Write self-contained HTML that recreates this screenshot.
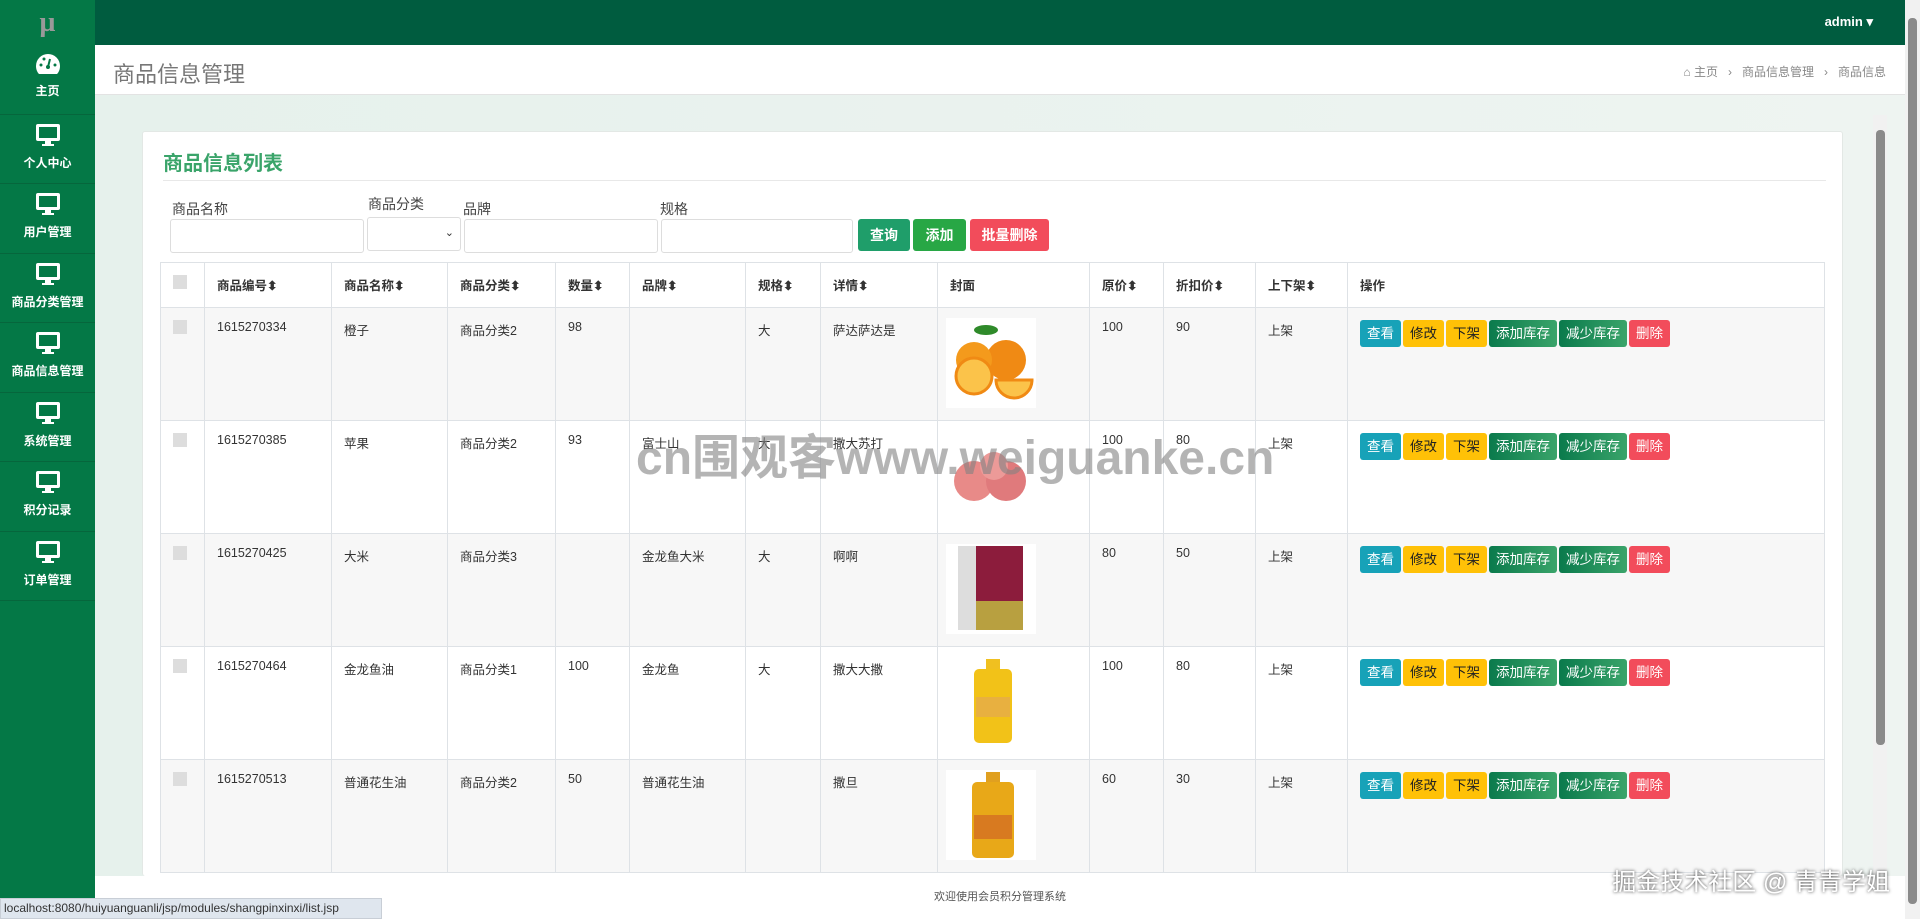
<!DOCTYPE html>
<html style="height:919px;overflow:hidden"><head><meta charset="utf-8">
<style>
*{box-sizing:border-box;margin:0;padding:0}
body{width:1920px;height:919px;overflow:hidden;position:relative;background:#fff;font-family:"Liberation Sans","Noto Sans CJK SC",sans-serif;color:#333;font-size:13px}
.side{position:absolute;left:0;top:0;width:95px;height:919px;background:#047846}
.logo{height:45px;color:#999;font-size:28px;font-weight:bold;text-align:center;line-height:45px;font-family:"Liberation Serif",serif}
.item{height:69.5px;border-bottom:1px solid #06663c;text-align:center;color:#fff;font-size:12px;font-weight:bold;padding-top:8px}
.item svg{display:block;margin:0 auto 7px}
.top{position:absolute;left:95px;top:0;width:1810px;height:45px;background:#005c3f}
.admin{position:absolute;right:32px;top:14px;color:#fff;font-size:13px;font-weight:bold}
.hdr{position:absolute;left:95px;top:45px;width:1810px;height:50px;background:#fff;border-bottom:1px solid #e3e3e3}
.hdr h1{position:absolute;left:18px;top:12px;font-size:22px;font-weight:normal;color:#777}
.bc{position:absolute;right:19px;top:18px;font-size:12px;color:#888}
.main{position:absolute;left:95px;top:95px;width:1810px;height:781px;background:linear-gradient(90deg,#e6f1ec,#eef4f1);overflow:hidden}
.card{position:absolute;left:47px;top:36px;width:1701px;height:745px;background:#fff;border:1px solid #e3e8e5;border-bottom:0;border-radius:3px;overflow:hidden}
.card h2{position:absolute;left:20px;top:15px;font-size:20px;color:#3aa46a}
.hr{position:absolute;left:20px;right:16px;top:48px;border-top:1px solid #e8e8e8}
.lbl{position:absolute;top:67px;font-size:14px;color:#444}
.inp{position:absolute;top:87px;height:34px;border:1px solid #ddd;border-radius:3px;background:#fff}
.btn{position:absolute;top:87px;height:32px;color:#fff;font-size:14px;font-weight:bold;line-height:32px;text-align:center;border-radius:3px}
table{position:absolute;left:17px;top:130px;border-collapse:collapse;width:1665px}
td,th{border:1px solid #dee2e6;vertical-align:top;text-align:left;padding:12px 12px;font-size:12.5px}
th{height:45px;font-weight:bold}
td{height:113px}
tr.o td{background:#f7f7f7}
.cb{display:inline-block;width:14px;height:14px;background:#ddd}
.ops span{display:inline-block;height:27px;line-height:27px;padding:0 7px;font-size:13.5px;margin-right:2px;border-radius:3px;color:#fff}
.v{background:#17a2b8}.e{background:#ffc107;color:#222!important}.g{background:linear-gradient(90deg,#0a7a4c,#3aa46a)}.r{background:#f24c5b}
.img{width:90px;height:90px;margin-top:-2px;margin-left:-4px;position:relative;background:#fff}
.foot{position:absolute;left:95px;top:876px;width:1810px;height:43px;background:#fff;text-align:center;line-height:43px;font-size:11px;color:#555}
.status{position:absolute;left:0;top:898px;width:382px;height:21px;background:#dfe6ee;border:1px solid #c8ced6;font-size:12px;color:#333;line-height:19px;padding-left:3px;overflow:hidden}
.sb{position:absolute;left:1905px;top:0;width:15px;height:919px;background:#f1f1f1}
.sb div{position:absolute;left:3px;top:18px;width:9px;height:886px;background:#8a8a8a;border-radius:4px}
.isb{position:absolute;left:1873px;top:115px;width:14px;height:760px;background:#f1f1f1}
.isb div{position:absolute;left:3px;top:15px;width:9px;height:615px;background:#8a8a8a;border-radius:4px}
.wm{position:absolute;left:636px;top:418px;font-size:48px;font-weight:bold;color:rgba(130,130,130,.6);white-space:nowrap}
.jj{position:absolute;right:30px;top:862px;font-size:24px;color:#fff;text-shadow:0 0 3px #333;white-space:nowrap}
</style></head><body>
<div class="side">
<div class="logo">µ</div>
<div class="item"><svg width="26" height="22" viewBox="0 0 26 22"><path d="M13 1A12 12 0 0 0 1 13c0 3 1 6 3 8h18c2-2 3-5 3-8A12 12 0 0 0 13 1z" fill="#fff"/><circle cx="13" cy="14" r="2" fill="#047846"/><path d="M13 14l2-8" stroke="#047846" stroke-width="2"/><circle cx="6" cy="12" r="1.5" fill="#047846"/><circle cx="20" cy="12" r="1.5" fill="#047846"/><circle cx="9" cy="6" r="1.5" fill="#047846"/></svg>主页</div>
<div class="item"><svg width="26" height="24" viewBox="0 0 26 24"><rect x="1" y="1" width="24" height="17" rx="2" fill="#fff"/><rect x="4" y="4" width="18" height="11" fill="#047846"/><rect x="10" y="18" width="6" height="4" fill="#fff"/><rect x="7" y="21" width="12" height="2" fill="#fff"/></svg>个人中心</div>
<div class="item"><svg width="26" height="24" viewBox="0 0 26 24"><rect x="1" y="1" width="24" height="17" rx="2" fill="#fff"/><rect x="4" y="4" width="18" height="11" fill="#047846"/><rect x="10" y="18" width="6" height="4" fill="#fff"/><rect x="7" y="21" width="12" height="2" fill="#fff"/></svg>用户管理</div>
<div class="item"><svg width="26" height="24" viewBox="0 0 26 24"><rect x="1" y="1" width="24" height="17" rx="2" fill="#fff"/><rect x="4" y="4" width="18" height="11" fill="#047846"/><rect x="10" y="18" width="6" height="4" fill="#fff"/><rect x="7" y="21" width="12" height="2" fill="#fff"/></svg>商品分类管理</div>
<div class="item"><svg width="26" height="24" viewBox="0 0 26 24"><rect x="1" y="1" width="24" height="17" rx="2" fill="#fff"/><rect x="4" y="4" width="18" height="11" fill="#047846"/><rect x="10" y="18" width="6" height="4" fill="#fff"/><rect x="7" y="21" width="12" height="2" fill="#fff"/></svg>商品信息管理</div>
<div class="item"><svg width="26" height="24" viewBox="0 0 26 24"><rect x="1" y="1" width="24" height="17" rx="2" fill="#fff"/><rect x="4" y="4" width="18" height="11" fill="#047846"/><rect x="10" y="18" width="6" height="4" fill="#fff"/><rect x="7" y="21" width="12" height="2" fill="#fff"/></svg>系统管理</div>
<div class="item"><svg width="26" height="24" viewBox="0 0 26 24"><rect x="1" y="1" width="24" height="17" rx="2" fill="#fff"/><rect x="4" y="4" width="18" height="11" fill="#047846"/><rect x="10" y="18" width="6" height="4" fill="#fff"/><rect x="7" y="21" width="12" height="2" fill="#fff"/></svg>积分记录</div>
<div class="item"><svg width="26" height="24" viewBox="0 0 26 24"><rect x="1" y="1" width="24" height="17" rx="2" fill="#fff"/><rect x="4" y="4" width="18" height="11" fill="#047846"/><rect x="10" y="18" width="6" height="4" fill="#fff"/><rect x="7" y="21" width="12" height="2" fill="#fff"/></svg>订单管理</div>
</div>
<div class="top"><div class="admin">admin ▾</div></div>
<div class="hdr"><h1>商品信息管理</h1><div class="bc">&#8962; 主页 &nbsp;&nbsp;›&nbsp;&nbsp; 商品信息管理 &nbsp;&nbsp;›&nbsp;&nbsp; 商品信息</div></div>
<div class="main">
<div class="card">
<h2>商品信息列表</h2><div class="hr"></div>
<div class="lbl" style="left:29px">商品名称</div>
<div class="lbl" style="left:225px;top:62px">商品分类</div>
<div class="lbl" style="left:320px">品牌</div>
<div class="lbl" style="left:517px">规格</div>
<div class="inp" style="left:27px;width:194px"></div>
<div class="inp" style="left:224px;width:94px;top:85px"><span style="position:absolute;right:6px;top:8px;font-size:11px">&#8964;</span></div>
<div class="inp" style="left:321px;width:194px"></div>
<div class="inp" style="left:518px;width:192px"></div>
<div class="btn" style="left:715px;width:52px;background:#1f9e6a">查询</div>
<div class="btn" style="left:770px;width:53px;background:#28a745">添加</div>
<div class="btn" style="left:827px;width:79px;background:#f24c5b">批量删除</div>
<table>
<tr><th style="width:44px"><span class="cb"></span></th><th style="width:127px">商品编号⬍</th><th style="width:116px">商品名称⬍</th><th style="width:108px">商品分类⬍</th><th style="width:74px">数量⬍</th><th style="width:116px">品牌⬍</th><th style="width:75px">规格⬍</th><th style="width:117px">详情⬍</th><th style="width:152px">封面</th><th style="width:74px">原价⬍</th><th style="width:92px">折扣价⬍</th><th style="width:92px">上下架⬍</th><th>操作</th></tr>
<tr class="o"><td><span class="cb"></span></td><td>1615270334</td><td>橙子</td><td>商品分类2</td><td>98</td><td></td><td>大</td><td>萨达萨达是</td><td><div class="img"><svg width="90" height="90"><circle cx="60" cy="42" r="20" fill="#f08a14"/><circle cx="28" cy="42" r="18" fill="#f49a1c"/><circle cx="28" cy="58" r="18" fill="#fbc34a" stroke="#f08a14" stroke-width="3"/><path d="M50 62h36a18 18 0 0 1-36 0z" fill="#fbc34a" stroke="#f08a14" stroke-width="3"/><ellipse cx="40" cy="12" rx="12" ry="5" fill="#2f8a2a"/></svg></div></td><td>100</td><td>90</td><td>上架</td><td class="ops"><span class="v">查看</span><span class="e">修改</span><span class="e">下架</span><span class="g">添加库存</span><span class="g">减少库存</span><span class="r">删除</span></td></tr>
<tr><td><span class="cb"></span></td><td>1615270385</td><td>苹果</td><td>商品分类2</td><td>93</td><td>富士山</td><td>大</td><td>撒大苏打</td><td><div class="img"><svg width="90" height="90"><circle cx="28" cy="50" r="20" fill="#e88a88"/><circle cx="60" cy="50" r="20" fill="#e07a7c"/><circle cx="48" cy="35" r="14" fill="#ec9a98"/></svg></div></td><td>100</td><td>80</td><td>上架</td><td class="ops"><span class="v">查看</span><span class="e">修改</span><span class="e">下架</span><span class="g">添加库存</span><span class="g">减少库存</span><span class="r">删除</span></td></tr>
<tr class="o"><td><span class="cb"></span></td><td>1615270425</td><td>大米</td><td>商品分类3</td><td></td><td>金龙鱼大米</td><td>大</td><td>啊啊</td><td><div class="img"><svg width="90" height="90"><rect x="12" y="2" width="65" height="84" fill="#ddd"/><rect x="30" y="2" width="47" height="55" fill="#8c1c3c"/><rect x="30" y="57" width="47" height="29" fill="#b8a040"/></svg></div></td><td>80</td><td>50</td><td>上架</td><td class="ops"><span class="v">查看</span><span class="e">修改</span><span class="e">下架</span><span class="g">添加库存</span><span class="g">减少库存</span><span class="r">删除</span></td></tr>
<tr><td><span class="cb"></span></td><td>1615270464</td><td>金龙鱼油</td><td>商品分类1</td><td>100</td><td>金龙鱼</td><td>大</td><td>撒大大撒</td><td><div class="img"><svg width="90" height="90"><rect x="40" y="2" width="14" height="10" fill="#f0c020"/><rect x="28" y="12" width="38" height="74" rx="5" fill="#f2c218"/><rect x="30" y="40" width="34" height="20" fill="#e8b040"/></svg></div></td><td>100</td><td>80</td><td>上架</td><td class="ops"><span class="v">查看</span><span class="e">修改</span><span class="e">下架</span><span class="g">添加库存</span><span class="g">减少库存</span><span class="r">删除</span></td></tr>
<tr class="o"><td><span class="cb"></span></td><td>1615270513</td><td>普通花生油</td><td>商品分类2</td><td>50</td><td>普通花生油</td><td></td><td>撒旦</td><td><div class="img"><svg width="90" height="90"><rect x="40" y="2" width="14" height="10" fill="#e0a020"/><rect x="26" y="12" width="42" height="76" rx="5" fill="#e8a818"/><rect x="28" y="45" width="38" height="24" fill="#d87a20"/></svg></div></td><td>60</td><td>30</td><td>上架</td><td class="ops"><span class="v">查看</span><span class="e">修改</span><span class="e">下架</span><span class="g">添加库存</span><span class="g">减少库存</span><span class="r">删除</span></td></tr>
</table>
</div>
</div>
<div class="isb"><div></div></div>
<div class="wm">cn围观客www.weiguanke.cn</div>
<div class="foot">欢迎使用会员积分管理系统</div>
<div class="status">localhost:8080/huiyuanguanli/jsp/modules/shangpinxinxi/list.jsp</div>
<div class="jj">掘金技术社区 @ 青青学姐</div>
<div class="sb"><div></div></div>
</body></html>
